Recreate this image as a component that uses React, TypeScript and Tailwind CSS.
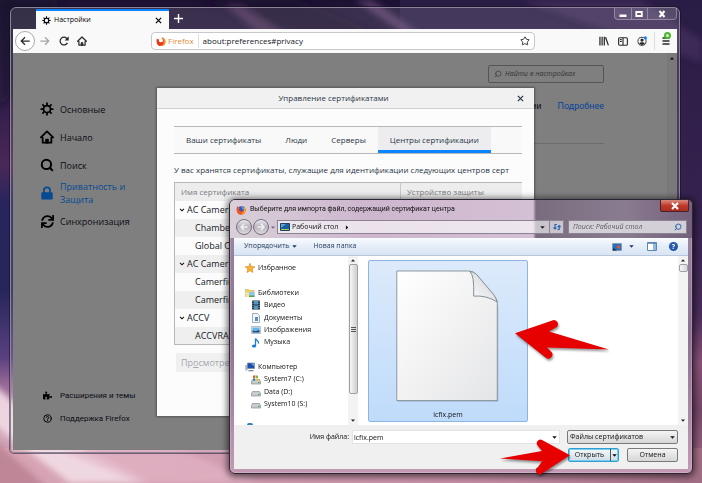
import type { ReactNode } from 'react';
import { FaPuzzlePiece, FaSync } from 'react-icons/fa';
import { Search, Star } from 'lucide-react';

const preferenceTabs = ['Ваши сертификаты', 'Люди', 'Серверы', 'Центры сертификации'];

const certificates = [
  { name: 'AC Camerfi', group: true },
  { name: 'Chamber', group: false },
  { name: 'Global Ch', group: false },
  { name: 'AC Camerfi', group: true },
  { name: 'Camerfirm', group: false },
  { name: 'Camerfirm', group: false },
  { name: 'ACCV', group: true },
  { name: 'ACCVRAI', group: false },
];

function Wallpaper() {
  return (
    <svg className="absolute inset-0 h-full w-full" viewBox="0 0 702 483" preserveAspectRatio="none" aria-hidden="true">
      <defs>
        <linearGradient id="sky" x1="0" y1="0" x2="0" y2="1">
          <stop offset="0" stopColor="#1d1233" />
          <stop offset="0.2" stopColor="#2f1c48" />
          <stop offset="0.34" stopColor="#4a2858" />
          <stop offset="0.42" stopColor="#28255c" />
          <stop offset="0.6" stopColor="#27265a" />
          <stop offset="0.74" stopColor="#59407f" />
          <stop offset="0.8" stopColor="#9c6c98" />
          <stop offset="0.9" stopColor="#d3a6ba" />
          <stop offset="1" stopColor="#c090a6" />
        </linearGradient>
        <linearGradient id="rightSky" x1="0" y1="0" x2="0" y2="1">
          <stop offset="0" stopColor="#2a1d45" />
          <stop offset="0.45" stopColor="#36224f" />
          <stop offset="0.65" stopColor="#4a2c5c" />
          <stop offset="0.75" stopColor="#8a5078" />
          <stop offset="0.85" stopColor="#76486a" />
          <stop offset="1" stopColor="#a8708a" />
        </linearGradient>
        <linearGradient id="floor" x1="0" y1="0" x2="1" y2="0">
          <stop offset="0" stopColor="#d8a5b5" />
          <stop offset="0.35" stopColor="#cf9cb0" />
          <stop offset="0.7" stopColor="#c48ea4" />
          <stop offset="1" stopColor="#a06d84" />
        </linearGradient>
        <filter id="soft">
          <feGaussianBlur stdDeviation="3" />
        </filter>
      </defs>
      <rect width="702" height="483" fill="url(#sky)" />
      <rect x="400" width="302" height="483" fill="url(#rightSky)" />
      <rect y="448" width="702" height="35" fill="url(#floor)" />
      <g filter="url(#soft)">
        <path d="M-6 385L40 425L150 483H70L-6 425Z" fill="#f2dde6" opacity="0.9" />
        <path d="M60 450L180 450L260 483H140Z" fill="#e2b4c4" opacity="0.7" />
        <path d="M-6 440L50 490H-6Z" fill="#b87e90" opacity="0.8" />
        <path d="M200 0L300 0L440 60H380Z" fill="#1a1030" opacity="0.7" />
        <path d="M355 0L372 0L420 34L405 34Z" fill="#6a4878" opacity="0.7" />
        <path d="M225 5L240 5L285 34L260 34Z" fill="#563661" opacity="0.7" />
        <path d="M520 0L640 0L702 40V62Z" fill="#4a3364" opacity="0.6" />
        <path d="M0 0L60 0L20 80L0 110Z" fill="#160e2a" opacity="0.5" />
      </g>
    </svg>
  );
}

function Gear({ className }: { className: string }) {
  return (
    <svg className={className} viewBox="0 0 16 16" fill="none" stroke="currentColor" aria-hidden="true">
      <circle cx="8" cy="8" r="4" strokeWidth="2" />
      <path
        d="M8 .6v3M8 12.400v3M.6 8h3M12.400 8h3M2.800 2.800l2.100 2.100M11.100 11.100l2.100 2.100M2.800 13.200l2.100-2.100M11.100 4.900l2.100-2.100"
        strokeWidth="2"
      />
    </svg>
  );
}

function House({ className }: { className: string }) {
  return (
    <svg className={className} viewBox="0 0 16 16" fill="none" stroke="currentColor" strokeWidth="2" aria-hidden="true">
      <path d="M1 8.500L8 1.500l7 7" strokeLinecap="round" strokeLinejoin="round" />
      <path d="M3 8v6.500h10V8" strokeLinejoin="round" />
      <path d="M6.500 15v-4.500h3V15z" fill="currentColor" strokeWidth="1" />
    </svg>
  );
}

function Lock({ className }: { className: string }) {
  return (
    <svg className={className} viewBox="0 0 16 16" fill="none" aria-hidden="true">
      <path d="M4.500 8V5a3.500 3.500 0 0 1 7 0v3" stroke="currentColor" strokeWidth="2" />
      <rect x="1.500" y="7" width="13" height="8.500" rx="1.200" fill="currentColor" />
    </svg>
  );
}

function Help({ className }: { className: string }) {
  return (
    <svg className={className} viewBox="0 0 24 24" fill="none" stroke="currentColor" strokeWidth="2.600" strokeLinecap="round" aria-hidden="true">
      <circle cx="12" cy="12" r="10" />
      <path d="M9 9a3 3 0 0 1 6 1c0 2-3 2.500-3 4.500M12 17.500v.2" />
    </svg>
  );
}

function Cross({ className }: { className: string }) {
  return (
    <svg className={className} viewBox="0 0 8 8" stroke="currentColor" strokeWidth="1.400" aria-hidden="true">
      <path d="M1 1l6 6M7 1L1 7" />
    </svg>
  );
}

function Caret({ className }: { className: string }) {
  return (
    <svg className={className} viewBox="0 0 6 4" fill="currentColor" aria-hidden="true">
      <path d="M0 .4h6L3 3.800z" />
    </svg>
  );
}

function FirefoxLogo({ className }: { className: string }) {
  return (
    <svg className={className} viewBox="0 0 16 16" aria-hidden="true">
      <circle cx="8.500" cy="8" r="6" fill="#2a5bc4" />
      <path d="M9 2.500c3 .5 5 3 4.500 6l-4-3z" fill="#5aa9ee" />
      <path
        d="M1 4.500C1.500 2.500 3 1.500 3 1.500c0 2 1.500 2.500 3 3.500-2 1-1.500 4.500 1.500 5 3 .5 4-1 5-3 .5-2-.5-4-1.500-5.500 3 1 4.500 4 4.500 6.500A7.500 7.500 0 0 1 8 15.700C3.500 15.700 0 12 1 4.500z"
        fill="#f0561d"
      />
      <path d="M13 3c2 2.500 2.500 6 .5 9-1 1.500-3 2.500-5 2.500 3-1.500 5-4 5-7z" fill="#ffca2b" />
    </svg>
  );
}

function FirefoxMark({ className }: { className: string }) {
  return (
    <svg className={className} viewBox="0 0 16 16" aria-hidden="true">
      <path d="M1.500 3C2 6 3 5 5 5c-1 3 0 5 3 5 3.500 0 4-3 2.500-5L9 2.500C13 3 15.500 6 15 9.500a7 7 0 0 1-14 0C.7 7 1 5 1.500 3z" fill="#e8361c" />
      <path d="M9 2c4 .5 6.500 4 6 7.500a7 7 0 0 1-9 6c4-.5 6.500-3 6.500-6.500C12.500 6 11 4 9 2z" fill="#ff9a1f" />
    </svg>
  );
}

function TitleBar() {
  return (
    <div className="flex h-[21px] items-end">
      <div className="ml-[23px] flex h-5 w-[133px] items-center border-t-2 border-[#0a84ff] bg-[#f9f9fa] pr-[7px] pl-1.5">
        <Gear className="size-[9px]" />
        <span className="ml-[3px] flex-1 text-[7px] leading-[12px]">Настройки</span>
        <button aria-label="Закрыть вкладку">
          <Cross className="size-[7px]" />
        </button>
      </div>
      <button aria-label="Новая вкладка" className="mb-1.5 ml-[5px] text-white">
        <svg className="size-[9px]" viewBox="0 0 9 9" stroke="currentColor" strokeWidth="1.400">
          <path d="M4.500 0v9M0 4.500h9" />
        </svg>
      </button>
      <div className="ml-auto flex h-3 w-[63px] self-start rounded-b border border-t-0 border-white/30 bg-white/10 text-white">
        <button aria-label="Свернуть" className="flex flex-1 items-center justify-center border-r border-white/30">
          <svg className="h-2 w-2.5" viewBox="0 0 10 8">
            <path d="M1.500 4.500h7v2.500h-7z" fill="currentColor" />
          </svg>
        </button>
        <button aria-label="Развернуть" className="flex flex-1 items-center justify-center border-r border-white/30">
          <svg className="h-2 w-2.5" viewBox="0 0 10 8">
            <path d="M2.300 2h5.500v4h-5.500z" fill="none" stroke="currentColor" strokeWidth="1.800" />
          </svg>
        </button>
        <button aria-label="Закрыть" className="flex w-7 items-center justify-center">
          <svg className="size-2" viewBox="0 0 8 8" stroke="currentColor" strokeWidth="2">
            <path d="M1.500 1l5 6M6.500 1l-5 6" />
          </svg>
        </button>
      </div>
    </div>
  );
}

function NavBar() {
  return (
    <div className="flex h-6 items-center bg-[#f9f9fa] pr-1.5 pl-0.5 text-[#2a2a2e]">
      <button aria-label="Назад" className="flex size-5 items-center justify-center rounded-full border border-[#aaa] bg-white">
        <svg className="size-2.5" viewBox="0 0 16 16" fill="none" stroke="currentColor" strokeWidth="2">
          <path d="M8 2L2 8l6 6M2 8h13.500" />
        </svg>
      </button>
      <button aria-label="Вперёд" className="ml-[5px] text-[#a5a5a8]">
        <svg className="size-2.5" viewBox="0 0 16 16" fill="none" stroke="currentColor" strokeWidth="2">
          <path d="M8 2l6 6-6 6M14 8H.5" />
        </svg>
      </button>
      <button aria-label="Обновить" className="ml-[9px]">
        <svg className="size-2.5" viewBox="0 0 16 16" fill="none" stroke="currentColor" strokeWidth="2">
          <path d="M13.500 11A6.200 6.200 0 1 1 13 4.500" />
          <path d="M15.500.5v6.500H9z" fill="currentColor" stroke="none" />
        </svg>
      </button>
      <button aria-label="Домой" className="ml-2">
        <House className="size-2.5" />
      </button>
      <div className="ml-16 flex h-[18px] flex-1 items-center rounded-sm border border-[#c8c8cc] bg-white px-1">
        <FirefoxMark className="size-2.5" />
        <span className="ml-0.5 border-r border-[#ddd] pr-1 text-[8px] leading-[14px] text-[#e08a35]">Firefox</span>
        <input aria-label="Адрес" defaultValue="about:preferences#privacy" className="ml-1 min-w-0 flex-1 bg-transparent text-[8px] text-[#15141a] outline-none" />
        <button aria-label="Добавить в закладки">
          <Star className="size-2.5" strokeWidth={2.2} />
        </button>
      </div>
      <div className="ml-16 flex items-center gap-[9px]">
        <button aria-label="Библиотека">
          <svg className="size-2.5" viewBox="0 0 16 16" stroke="currentColor" strokeWidth="2">
            <path d="M1.500 1v14M5 1v14M8.500 1v14M10.500 2l4.500 13" />
          </svg>
        </button>
        <button aria-label="Боковая панель">
          <svg className="h-[9px] w-2.5" viewBox="0 0 16 14" fill="none" stroke="currentColor" strokeWidth="1.800">
            <rect x="1" y="1" width="14" height="12" rx="1.500" />
            <path d="M8 1v12M3 4h3M3 7h3" />
          </svg>
        </button>
        <button aria-label="Аккаунт">
          <svg className="size-2.5" viewBox="0 0 16 16">
            <circle cx="8" cy="8.500" r="6.500" fill="none" stroke="currentColor" strokeWidth="1.400" />
            <circle cx="8" cy="6.500" r="2.600" fill="currentColor" />
            <path d="M3.500 12c1-2.500 8-2.500 9 0-2 3-7 3-9 0z" fill="currentColor" />
            <circle cx="13.500" cy="3" r="2.500" fill="#0a84ff" />
          </svg>
        </button>
        <button aria-label="Меню" className="relative -ml-0.5 border-l border-[#ddd] py-1 pl-1.5">
          <svg className="size-2.5" viewBox="0 0 10 10" stroke="currentColor" strokeWidth="1.300">
            <path d="M1.500 2h7M1.500 5h7M1.500 8h7" />
          </svg>
          <span className="absolute top-0 right-0 size-[7px] rounded-full border-2 border-[#4db52c] bg-[#d6f5c8]" />
        </button>
      </div>
    </div>
  );
}

function SideLink({ icon, children, active, small }: { icon: ReactNode; children: ReactNode; active?: boolean; small?: boolean }) {
  const tone = active ? 'text-[#064a94]' : 'text-[#0c0c14]';
  const size = small ? "h-[23px] font-['Roboto','Open_Sans',sans-serif] text-[8px]" : 'h-7 text-[9px] leading-[13px]';
  return (
    <a href="#" className={`flex items-center gap-1.5 ${size} ${tone}`}>
      <span className="flex w-3.5 shrink-0 justify-center">{icon}</span>
      <span>{children}</span>
    </a>
  );
}

function Sidebar() {
  return (
    <nav className="flex w-36 flex-col pt-[42px] pr-2 pb-5 pl-[27px]">
      <SideLink icon={<Gear className="size-3.5 text-black" />}>Основные</SideLink>
      <SideLink icon={<House className="size-3.5 text-black" />}>Начало</SideLink>
      <SideLink icon={<Search className="size-3.5 text-black" strokeWidth={3.4} />}>Поиск</SideLink>
      <SideLink active icon={<Lock className="size-3.5" />}>
        Приватность и<br />
        Защита
      </SideLink>
      <SideLink icon={<FaSync className="size-[13px] text-black" />}>Синхронизация</SideLink>
      <div className="mt-auto">
        <SideLink small icon={<FaPuzzlePiece className="size-[9px] text-black" />}>
          Расширения и темы
        </SideLink>
        <SideLink small icon={<Help className="size-[9px] text-black" />}>
          Поддержка Firefox
        </SideLink>
      </div>
    </nav>
  );
}

function CertificateDialog() {
  return (
    <section className="absolute top-[35px] right-[143px] bottom-[34px] left-36 flex flex-col bg-[#fcfcfd] text-[8px] text-[#2b3644] shadow-[0_0_2px_1px_rgba(0,0,0,0.35)]">
      <header className="relative flex h-[21px] items-center justify-center border-b border-[#d0d0d2] bg-[#f1f1f2] pr-6">
        <h1>Управление сертификатами</h1>
        <button aria-label="Закрыть" className="absolute right-2.5">
          <Cross className="size-[7px]" />
        </button>
      </header>
      <div className="overflow-hidden pt-[17px] pr-3 pl-[17px]">
        <div role="tablist" className="flex h-7 border-y border-[#b8b8ba] bg-[#f9f9fa]">
          {preferenceTabs.map((tab, i) => (
            <button
              key={tab}
              role="tab"
              aria-selected={i === 3}
              className={i === 3 ? 'border-b-3 border-[#0a84ff] bg-[#ededf0] px-3 pt-[3px]' : 'px-3'}
            >
              {tab}
            </button>
          ))}
        </div>
        <p className="mt-2 leading-4 whitespace-nowrap">
          У вас хранятся сертификаты, служащие для идентификации следующих центров серт
        </p>
        <table className="mt-1 w-full table-fixed border border-r-0 border-[#b8b8ba]">
          <thead className="bg-[#ededee] text-left text-[#7c7c80]">
            <tr className="h-[18px]">
              <th className="w-[65%] overflow-hidden pl-1.5 font-normal">Имя сертификата</th>
              <th className="border-l border-[#c8c8ca] pl-1.5 font-normal">Устройство защиты</th>
            </tr>
          </thead>
          <tbody className="text-[9px] text-[#15181f]">
            {certificates.map((cert, i) => (
              <tr key={i} className="h-[18px] even:bg-[#efeff0]">
                <td colSpan={2} className={cert.group ? 'pl-1' : 'pl-5'}>
                  <span className="flex items-center gap-0.5">
                    {cert.group && (
                      <svg className="h-1 w-1.5" viewBox="0 0 6 4" fill="none" stroke="currentColor" strokeWidth="1.100">
                        <path d="M1 .8l2 2 2-2" />
                      </svg>
                    )}
                    {cert.name}
                  </span>
                </td>
              </tr>
            ))}
          </tbody>
        </table>
        <button disabled className="mt-2 ml-0.5 h-[19px] bg-[#f0f0f1] px-[5px] text-[9px] text-[#a5a8ae]">
          Пр<u>о</u>смотрет
        </button>
      </div>
    </section>
  );
}

function Browser() {
  return (
    <div className="absolute top-[7px] right-[22px] bottom-[30px] left-2.5 flex flex-col rounded-t-md rounded-b border border-[#8d8499] bg-white/12 px-0.5 pb-0.5 shadow-[0_0_0_1px_rgba(20,10,30,0.5)]">
      <TitleBar />
      <NavBar />
      <div className="relative flex min-h-0 flex-1 bg-[#7f7f7f]">
        <Sidebar />
        <main className="flex flex-1 flex-col items-end pt-3 pr-[63px]">
          <label className="flex h-[18px] w-[116px] items-center gap-[3px] rounded-xs border border-[#555] px-[5px] text-[#333]">
            <Search className="size-2 -scale-x-100" />
            <input placeholder="Найти в настройках" className="min-w-0 flex-1 bg-transparent text-[7px] italic outline-none placeholder:text-[#333]" />
          </label>
          <p className="mt-4 flex gap-4 font-['Roboto','Open_Sans',sans-serif] text-[9px] leading-[14px] text-[#111]">
            <span>ии</span>
            <a href="#" className="text-[#07449a]">
              Подробнее
            </a>
          </p>
          <hr className="mt-[30px] w-full border-[#6c6c6c]" />
        </main>
        <div className="flex w-2.5 justify-center bg-[#797979] pt-1">
          <Caret className="h-[3px] w-1 rotate-180" />
        </div>
        <CertificateDialog />
      </div>
    </div>
  );
}

function StarIcon() {
  return (
    <svg className="size-2.5" viewBox="0 0 10 10" aria-hidden="true">
      <path d="M5 .3l1.300 3.200 3.500.3-2.700 2.200.9 3.500L5 7.700 2 9.500l.9-3.500L.2 3.800l3.500-.3z" fill="#f9b233" stroke="#d9801a" strokeWidth=".6" />
    </svg>
  );
}

function LibraryIcon() {
  return (
    <svg className="size-2.5" viewBox="0 0 10 10" aria-hidden="true">
      <path d="M.5 1.500h3l1 1h4.500v6H.5z" fill="#f0cf6d" stroke="#c79b38" strokeWidth=".5" />
      <path d="M3.500 4h6v5h-6z" fill="#8cc7e8" />
      <path d="M4 7.500h5.500V9H4z" fill="#58a25a" />
      <path d="M0 4.500h4v4.500H1z" fill="#f8e29a" />
    </svg>
  );
}

function VideoIcon() {
  return (
    <svg className="size-2.5" viewBox="0 0 10 10" aria-hidden="true">
      <path d="M1 .5h8v9H1z" fill="#263746" />
      <path d="M3 1h4v3.500H3zM3 5.500h4V9H3z" fill="#4f9bc4" />
      <path d="M2 1v8M8 1v8" stroke="#c5d2dc" strokeWidth=".7" strokeDasharray="1 1" />
    </svg>
  );
}

function DocumentIcon() {
  return (
    <svg className="size-2.5" viewBox="0 0 10 10" aria-hidden="true">
      <path d="M1.500 .5h5l2 2v7h-7z" fill="#f2f6fa" stroke="#7b8a99" strokeWidth=".7" />
      <path d="M4 4h3v4H4z" fill="#5d8fbf" />
    </svg>
  );
}

function ImageIcon() {
  return (
    <svg className="size-2.5" viewBox="0 0 10 10" aria-hidden="true">
      <path d="M.5 1.500h9v7h-9z" fill="#eaf1f7" stroke="#8898a6" strokeWidth=".6" />
      <path d="M1.500 2.500h7v5h-7z" fill="#67b4e8" />
      <path d="M1.500 7.500v-2l3 .8 4-1.300v2.500z" fill="#1f4a72" />
    </svg>
  );
}

function MusicIcon() {
  return (
    <svg className="size-2.5" viewBox="0 0 10 10" aria-hidden="true">
      <path d="M4.500 8V.5c1 2 3.500 2 3 5" fill="none" stroke="#1d7fd0" strokeWidth="1.300" />
      <ellipse cx="3" cy="8" rx="2.200" ry="1.600" fill="#1d7fd0" />
    </svg>
  );
}

function ComputerIcon() {
  return (
    <svg className="size-2.5" viewBox="0 0 10 10" aria-hidden="true">
      <path d="M.3 3h2.200v5.500H.3z" fill="#a9b6c2" />
      <path d="M2.500 1h7v5.500h-7z" fill="#1c4fb0" stroke="#7489a0" strokeWidth=".7" />
      <path d="M6 1.500h3v2.500z" fill="#7fb5f5" />
      <path d="M4 8h4.500v1.200H3z" fill="#7c8895" />
    </svg>
  );
}

function DriveIcon({ system }: { system?: boolean }) {
  return (
    <svg className="size-2.5" viewBox="0 0 10 10" aria-hidden="true">
      <path d="M1.500 4.500h7l1.200 2.500v2H.3V7z" fill="#c8ccd0" stroke="#777e85" strokeWidth=".6" />
      <path d="M7 7.500h1.500" stroke="#3aa33a" />
      {system && (
        <>
          <path d="M2 .8l2-.6v2.600l-2 .4z" fill="#e2562a" />
          <path d="M4.500.3l2.500.5v2.500l-2.500-.3z" fill="#7db63a" />
          <path d="M2 3.600l2-.3v2.400l-2 .2z" fill="#2f83d6" />
          <path d="M4.500 3.400l2.500.3v2.200H4.500z" fill="#f5c02a" />
        </>
      )}
    </svg>
  );
}

// null keeps an empty line between the groups
const places = [
  { label: 'Избранное', icon: <StarIcon />, root: true },
  null,
  { label: 'Библиотеки', icon: <LibraryIcon />, root: true },
  { label: 'Видео', icon: <VideoIcon /> },
  { label: 'Документы', icon: <DocumentIcon /> },
  { label: 'Изображения', icon: <ImageIcon /> },
  { label: 'Музыка', icon: <MusicIcon /> },
  null,
  { label: 'Компьютер', icon: <ComputerIcon />, root: true },
  { label: 'System7 (C:)', icon: <DriveIcon system /> },
  { label: 'Data (D:)', icon: <DriveIcon /> },
  { label: 'System10 (S:)', icon: <DriveIcon /> },
  null,
];

function RoundArrow({ label, flip }: { label: string; flip?: boolean }) {
  return (
    <button
      aria-label={label}
      className="flex size-4 items-center justify-center rounded-full border border-[#77707c] bg-linear-to-b from-[#e9e6ec] via-[#b9b4bf] to-[#dcd9df] text-white/80"
    >
      <svg className={flip ? 'size-2 rotate-180' : 'size-2'} viewBox="0 0 8 8" fill="none" stroke="currentColor" strokeWidth="1.400">
        <path d="M4 1L1 4l3 3M1 4h6.500" />
      </svg>
    </button>
  );
}

function ScrollBar({ children }: { children: ReactNode }) {
  return (
    <div className="flex w-2.5 shrink-0 flex-col items-center justify-between bg-[#f3f3f4] py-[3px] text-[#222]">
      <Caret className="h-[3px] w-1 rotate-180" />
      {children}
      <Caret className="h-[3px] w-1" />
    </div>
  );
}

function FilePage() {
  return (
    <svg className="h-[134px] w-[106px]" viewBox="0 0 106 134" aria-hidden="true">
      <defs>
        <linearGradient id="paper" x1="0" y1="0" x2="1" y2="1">
          <stop offset="0" stopColor="#ffffff" />
          <stop offset="0.35" stopColor="#f6f6f6" />
          <stop offset="1" stopColor="#e4e5e7" />
        </linearGradient>
        <linearGradient id="fold" x1="0" y1="1" x2="1" y2="0">
          <stop offset="0" stopColor="#ffffff" />
          <stop offset="1" stopColor="#c9ccd0" />
        </linearGradient>
      </defs>
      <path d="M2 2.500h74q4 0 7 3l19 26q2 3 2 6v96H2z" fill="#5d6b7c" opacity="0.45" />
      <path d="M1 1h73q4 0 7 3l20 24q2 3 2 6v98.500H1z" fill="url(#paper)" stroke="#8e979f" />
      <path d="M75 1.500q5 3 4 25 13-1 24 6-1-4-4-8L82 4.500q-3-3-7-3z" fill="url(#fold)" stroke="#858c93" />
    </svg>
  );
}

function OpenDialog() {
  return (
    <section className="absolute top-[199px] right-[9px] bottom-[9px] left-[229px] flex flex-col overflow-hidden rounded-md border border-[#2e2733] bg-linear-to-b from-[#9d8ba4] via-[#8d7092] to-[#c49ab4] px-1 pb-1 text-[7px] text-[#111] shadow-[0_1px_6px_2px_rgba(0,0,0,0.55)] ring-1 ring-white/20 ring-inset">
      <div className="-mx-1 flex h-[38px] shrink-0 flex-col bg-[linear-gradient(90deg,#d9cfd9_0,#cdb6ce_30%,#d4c0d4_303px,#786c7e_306px,#8a7c90_85%,#74607c_100%)] pr-[5px] pl-1.5">
        <div className="flex h-[19px] items-center gap-1">
          <FirefoxLogo className="size-2.5" />
          <h2 className="flex-1 font-['Roboto','Open_Sans',sans-serif]">Выберите для импорта файл, содержащий сертификат центра</h2>
          <button
            aria-label="Закрыть"
            className="-mr-0.5 flex h-3 w-[29px] items-center justify-center self-start rounded-b-xs border border-t-0 border-[#4b2028] bg-linear-to-b from-[#d98a80] via-[#c0392b] to-[#a82f22] text-white"
          >
            <svg className="size-2" viewBox="0 0 8 8" stroke="currentColor" strokeWidth="2">
              <path d="M1 1l6 6M7 1L1 7" />
            </svg>
          </button>
        </div>
        <div className="flex h-4 items-center gap-px">
          <RoundArrow label="Назад" />
          <RoundArrow label="Вперёд" flip />
          <Caret className="mx-px h-[3px] w-1 text-[#6f6676]" />
          <div className="flex h-3.5 flex-1 items-center border border-[#8b8292] bg-white/60 pl-0.5">
            <svg className="h-2 w-2.5" viewBox="0 0 10 8" aria-hidden="true">
              <path d="M.5.5h9v7h-9z" fill="#1d5f9e" stroke="#24405e" />
              <path d="M1 1h5L1 5z" fill="#56a5e0" />
              <path d="M1 6.500h8" stroke="#9fd05a" />
            </svg>
            <span className="ml-0.5">Рабочий стол</span>
            <Caret className="ml-1.5 h-[3px] w-1.5 -rotate-90" />
            <button aria-label="Предыдущие расположения" className="ml-auto px-1">
              <Caret className="h-[3px] w-[5px] text-[#15182f]" />
            </button>
            <button aria-label="Обновить" className="flex h-full w-3.5 items-center justify-center border-l border-[#8b8292] text-[#2b66b8]">
              <svg className="size-2" viewBox="0 0 8 8" fill="none" stroke="currentColor" strokeWidth="1.200">
                <path d="M4 1.500H2V6M.5 4.500L2 6l1.500-1.500M4.500 6.500h1.700V2.500M4.700 4l1.500-1.500L7.700 4" />
              </svg>
            </button>
          </div>
          <label className="ml-[3px] flex h-3.5 w-[119px] items-center border border-[#8b8292] bg-[#d4d0d7] px-1 text-[#2766ad]">
            <input placeholder="Поиск: Рабочий стол" className="min-w-0 flex-1 bg-transparent italic outline-none placeholder:text-[#5f5b66]" />
            <Search className="size-2 -scale-x-100" strokeWidth={3} />
          </label>
        </div>
      </div>

      <div className="flex min-h-0 flex-1 flex-col bg-[#f0f0f0]">
        <div className="flex h-[18px] shrink-0 items-center border-b border-[#b8c8dc] bg-linear-to-b from-[#fafcff] via-[#e4edf8] to-[#d9e5f4] px-2.5 text-[#1e395b]">
          <button className="flex items-center gap-[3px]">
            Упорядочить
            <Caret className="h-[3px] w-[5px]" />
          </button>
          <button className="ml-4">Новая папка</button>
          <div className="ml-auto flex items-center">
            <button aria-label="Вид" className="flex items-center gap-[7px]">
              <svg className="h-2 w-2.5" viewBox="0 0 10 8" aria-hidden="true">
                <path d="M.5.5h9v7h-9z" fill="#2a6fbe" stroke="#889" strokeWidth=".5" />
                <path d="M4 4l4-2v4z" fill="#e0562c" />
                <path d="M1 5l4 2.500H1z" fill="#1e2a2a" />
              </svg>
              <Caret className="h-[3px] w-[5px]" />
            </button>
            <button aria-label="Область просмотра" className="ml-[13px]">
              <svg className="h-[9px] w-2.5" viewBox="0 0 10 9" aria-hidden="true">
                <path d="M.5.5h9v8h-9z" fill="#fff" stroke="#5d87b2" />
                <path d="M6 1h3v7H6z" fill="#8fbbe2" />
                <path d="M.5 1.300h9" stroke="#5d87b2" />
              </svg>
            </button>
            <button aria-label="Справка" className="ml-3 size-[9px] rounded-full bg-[#2458b0] text-center leading-[9px] font-bold text-white">
              ?
            </button>
          </div>
        </div>

        <div className="flex min-h-0 flex-1 bg-white">
          <div className="flex w-[114px] shrink-0 flex-col overflow-hidden pt-1.5">
            <ul className="flex min-h-0 flex-1 flex-col">
              {places.map((place, i) => (
                <li key={i} className={place?.root ? 'flex min-h-0 flex-1 items-center gap-[3px] pl-[11px]' : 'flex min-h-0 flex-1 items-center gap-[3px] pl-[17px]'}>
                  {place?.icon}
                  {place?.label}
                </li>
              ))}
            </ul>
            <span className="ml-[13px] h-0.5 w-1.5 rounded-t-full bg-[#2f7fb8]" />
          </div>
          <ScrollBar>
            <div className="mt-0.5 mb-[25px] flex w-[9px] flex-1 items-center justify-center rounded-xs border border-[#a0a0a2] bg-linear-to-r from-[#f6f6f6] to-[#cfcfd1]">
              <svg className="size-[5px]" viewBox="0 0 5 5" stroke="#555">
                <path d="M0 .5h5M0 2.500h5M0 4.500h5" />
              </svg>
            </div>
          </ScrollBar>
          <div className="flex-1 pt-1 pb-[3px] pl-2.5">
            <figure className="flex h-full w-40 flex-col items-center rounded-xs border border-[#8db5e2] bg-linear-to-b from-[#dceafb] to-[#bfdbfb] pt-[9px]">
              <FilePage />
              <figcaption className="mt-[7px] leading-3">icfix.pem</figcaption>
            </figure>
          </div>
          <ScrollBar>
            <div className="mt-0.5 mb-auto h-2 w-[9px] rounded-xs border border-[#a0a0a2] bg-linear-to-r from-[#f6f6f6] to-[#d6d6d8]" />
          </ScrollBar>
        </div>

        <div className="flex h-11 shrink-0 flex-col gap-1 pt-[5px] pr-2.5">
          <div className="flex h-3.5 items-center">
            <label htmlFor="filename" className="w-[115px] text-right">
              Имя файла:
            </label>
            <div className="relative mr-[7px] ml-[3px] h-full flex-1">
              <input id="filename" defaultValue="icfix.pem" className="h-full w-full border border-[#e2e3e6] bg-white px-px outline-none" />
              <Caret className="absolute top-[6px] right-[3px] h-[3px] w-[5px]" />
            </div>
            <div className="relative h-full w-[111px]">
              <select aria-label="Тип файлов" className="h-full w-full appearance-none rounded-xs border border-[#77797c] bg-linear-to-b from-[#f4f4f4] to-[#d6d6d6] pl-0.5">
                <option>Файлы сертификатов</option>
              </select>
              <Caret className="pointer-events-none absolute top-[6px] right-[3px] h-[3px] w-[5px]" />
            </div>
          </div>
          <div className="flex h-3.5 justify-end gap-2">
            <div className="flex w-[51px] rounded-xs border border-[#2f9fd0] bg-linear-to-b from-[#f4f8fa] to-[#cfdde6] ring-1 ring-[#79cdf0] ring-inset">
              <button className="flex-1 leading-3">Открыть</button>
              <button aria-label="Другие варианты" className="flex w-2 items-center justify-center border-l border-[#555]">
                <Caret className="h-[3px] w-[5px]" />
              </button>
            </div>
            <button className="w-[51px] rounded-xs border border-[#77797c] bg-linear-to-b from-[#f4f4f4] to-[#d6d6d6] leading-3">Отмена</button>
          </div>
        </div>
      </div>
    </section>
  );
}

function Pointers() {
  return (
    <>
      <svg className="pointer-events-none absolute right-[92px] bottom-[121px] h-11 w-[98px] drop-shadow-[1px_2px_1px_rgba(0,0,0,0.4)]" viewBox="0 0 98 44" fill="#e60000" aria-hidden="true">
        <path d="M3 15.300L41 2.200A4 4 0 0 1 44 9.500L37 13.500L97 31.500L35 29.500L39 33.500A4 4 0 0 1 33.500 39.500Z" />
      </svg>
      <svg className="pointer-events-none absolute right-[130px] bottom-2 h-9 w-[74px] drop-shadow-[1px_2px_1px_rgba(0,0,0,0.4)]" viewBox="0 0 74 36" fill="#e60000" aria-hidden="true">
        <path d="M72 16.300L44 .9A3.700 3.700 0 0 0 40 7L44 12L2 19.500L44 22.300L40 28A3.700 3.700 0 0 0 43.500 34.800Z" />
      </svg>
    </>
  );
}

export default function App() {
  return (
    <div className="relative h-screen w-full overflow-hidden bg-[#1d1233] font-['Open_Sans','Noto_Sans',sans-serif] leading-normal">
      <Wallpaper />
      <Browser />
      <OpenDialog />
      <Pointers />
    </div>
  );
}
